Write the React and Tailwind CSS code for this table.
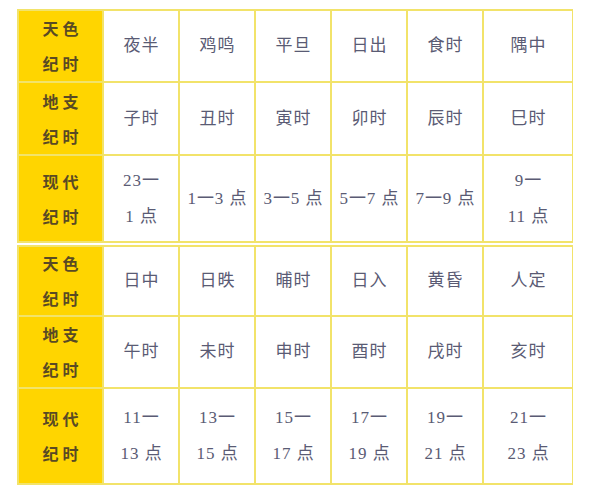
import React from 'react';

const halves = [
  {
    rows: [
      { head: ['天色', '纪时'], cells: [['夜半'], ['鸡鸣'], ['平旦'], ['日出'], ['食时'], ['隅中']], h: 'h-[70px]' },
      { head: ['地支', '纪时'], cells: [['子时'], ['丑时'], ['寅时'], ['卯时'], ['辰时'], ['巳时']], h: 'h-[71px]' },
      {
        head: ['现代', '纪时'],
        cells: [['23一', '1 点'], ['1一3 点'], ['3一5 点'], ['5一7 点'], ['7一9 点'], ['9一', '11 点']],
        h: 'h-[85px]',
      },
    ],
  },
  {
    rows: [
      { head: ['天色', '纪时'], cells: [['日中'], ['日昳'], ['晡时'], ['日入'], ['黄昏'], ['人定']], h: 'h-[68px]' },
      { head: ['地支', '纪时'], cells: [['午时'], ['未时'], ['申时'], ['酉时'], ['戌时'], ['亥时']], h: 'h-[70px]' },
      {
        head: ['现代', '纪时'],
        cells: [['11一', '13 点'], ['13一', '15 点'], ['15一', '17 点'], ['17一', '19 点'], ['19一', '21 点'], ['21一', '23 点']],
        h: 'h-[94px]',
      },
    ],
  },
];

const Half = ({ rows }) => (
  <div className="grid grid-cols-[83px_repeat(5,74px)_88px] gap-[2px] border-2 border-r-[3px] border-[#f2e36a] bg-[#f2e36a]">
    {rows.map((row, i) => (
      <React.Fragment key={i}>
        <div className={`${row.h} flex flex-col items-center justify-center bg-[#ffd500] font-bold text-[16px] leading-[35px] tracking-[4px] pl-[4px] text-[#594a24] font-['Noto_Sans_CJK_SC',sans-serif]`}>
          {row.head.map((t) => (
            <span key={t}>{t}</span>
          ))}
        </div>
        {row.cells.map((lines, j) => (
          <div
            key={j}
            className={`${row.h} flex flex-col items-center justify-center bg-white text-[17px] leading-[36px] text-[#5a5b74] font-['Liberation_Serif','Noto_Sans_CJK_SC',serif]`}
          >
            {lines.map((t) => (
              <span key={t} className="tracking-[1px] pl-[1px] whitespace-nowrap">
                {t}
              </span>
            ))}
          </div>
        ))}
      </React.Fragment>
    ))}
  </div>
);

export default function App() {
  return (
    <div className="w-[593px] h-[500px] bg-white pt-[9px] pl-[17px]">
      <div className="flex flex-col gap-[2px] w-[556px]">
        {halves.map((h, i) => (
          <Half key={i} rows={h.rows} />
        ))}
      </div>
    </div>
  );
}
